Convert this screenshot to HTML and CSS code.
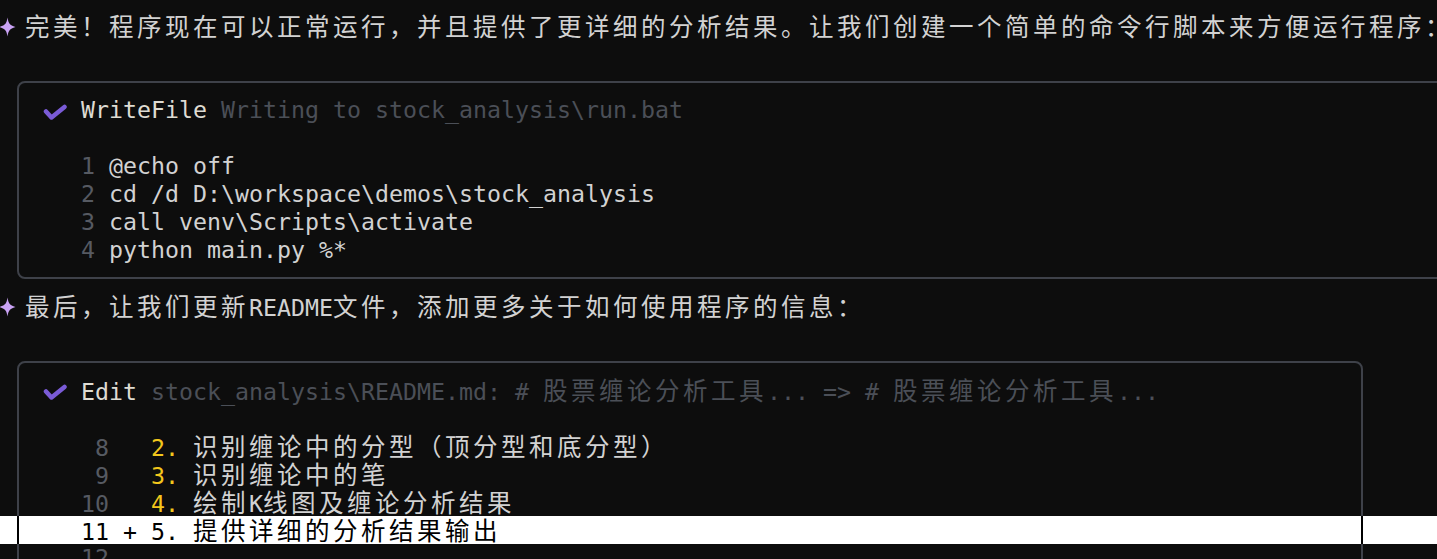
FILE: index.html
```html
<!DOCTYPE html>
<html lang="zh">
<head>
<meta charset="utf-8">
<title>Terminal</title>
<link rel="stylesheet" href="styles.css">
</head>
<body>
<div class="term">
  <div class="row msg"><svg class="spark" viewBox="0 0 28 28" width="28" height="28"><path d="M10.5 5.5 C11.5 11.5 12.5 13 18.5 15 C12.5 17 11.5 18.5 10.5 24.5 C9.5 18.5 8.5 17 2.5 15 C8.5 13 9.5 11.5 10.5 5.5 Z" fill="#c9a2f4"/></svg><span class="c">完美！程序现在可以正常运行，并且提供了更详细的分析结果。让我们创建一个简单的命令行脚本来方便运行程序：</span></div>

  <div class="box box1">
    <div class="row head"><svg class="check" viewBox="0 0 28 28" width="28" height="28"><path d="M7 15.5 L12.5 21.5 L25.5 11" fill="none" stroke="#7a5bd6" stroke-width="4.5" stroke-linecap="round" stroke-linejoin="round"/></svg><span class="tool">WriteFile</span> <span class="dim">Writing to stock_analysis\run.bat</span></div>
    <div class="row"></div>
    <div class="row">    <span class="ln">1</span> @echo off</div>
    <div class="row">    <span class="ln">2</span> cd /d D:\workspace\demos\stock_analysis</div>
    <div class="row">    <span class="ln">3</span> call venv\Scripts\activate</div>
    <div class="row">    <span class="ln">4</span> python main.py %*</div>
  </div>

  <div class="row msg"><svg class="spark" viewBox="0 0 28 28" width="28" height="28"><path d="M10.5 5.5 C11.5 11.5 12.5 13 18.5 15 C12.5 17 11.5 18.5 10.5 24.5 C9.5 18.5 8.5 17 2.5 15 C8.5 13 9.5 11.5 10.5 5.5 Z" fill="#c9a2f4"/></svg><span class="c">最后，让我们更新</span>README<span class="c">文件，添加更多关于如何使用程序的信息：</span></div>

  <div class="box box2">
    <div class="row head"><svg class="check" viewBox="0 0 28 28" width="28" height="28"><path d="M7 15.5 L12.5 21.5 L25.5 11" fill="none" stroke="#7a5bd6" stroke-width="4.5" stroke-linecap="round" stroke-linejoin="round"/></svg><span class="tool">Edit</span> <span class="dim">stock_analysis\README.md: # <span class="c">股票缠论分析工具</span>... =&gt; # <span class="c">股票缠论分析工具</span>...</span></div>
    <div class="row"></div>
    <div class="row">    <span class="ln"> 8</span>   <span class="num">2.</span> <span class="c">识别缠论中的分型（顶分型和底分型）</span></div>
    <div class="row">    <span class="ln"> 9</span>   <span class="num">3.</span> <span class="c">识别缠论中的笔</span></div>
    <div class="row">    <span class="ln">10</span>   <span class="num">4.</span> <span class="c">绘制</span>K<span class="c">线图及缠论分析结果</span></div>
    <div class="row hl">    11 + 5. <span class="c">提供详细的分析结果输出</span></div>
    <div class="row">    <span class="ln">12</span></div>
  </div>
</div>
</body>
</html>
```

FILE: styles.css
```css
html, body {
  margin: 0;
  padding: 0;
  background: #0d0d0d;
  overflow: hidden;
  width: 1437px;
  height: 559px;
}

.term {
  margin-left: -3px;
  padding-top: 12px;
  font-family: "DejaVu Sans Mono", "Noto Sans CJK SC", monospace;
  font-size: 23.25px;
  color: #d2d2d2;
}

.row {
  height: 28px;
  line-height: 28px;
  white-space: pre;
}

.c {
  font-size: 24.5px;
  letter-spacing: 3.5px;
  font-family: "Noto Sans CJK SC", sans-serif;
}

.spark {
  display: inline-block;
  width: 28px;
  height: 28px;
  vertical-align: top;
}

.box {
  margin-left: 20px;
  border: 2px solid #3e4149;
  border-radius: 8px;
  box-sizing: border-box;
  padding: 13px 0 13px 6px;
}

.box1 {
  margin-top: 41px;
  margin-bottom: 13px;
  width: 1600px;
}

.box2 {
  margin-top: 41px;
  width: 1346px;
}

.head {
  padding-left: 14px;
}

.check {
  display: inline-block;
  width: 28px;
  height: 28px;
  vertical-align: top;
  margin-right: 14px;
}

.tool {
  color: #dedbd2;
}

.dim {
  color: #4b4f57;
}

.ln {
  color: #565a62;
}

.num {
  color: #f3c71c;
}

.hl {
  margin-left: -25px;
  margin-right: -76px;
  padding-left: 25px;
  color: #000;
  background: linear-gradient(90deg,
    #fff 0 17px,
    #000 17px 19px,
    #fff 19px 1361px,
    #000 1361px 1363px,
    #fff 1363px);
}
```
